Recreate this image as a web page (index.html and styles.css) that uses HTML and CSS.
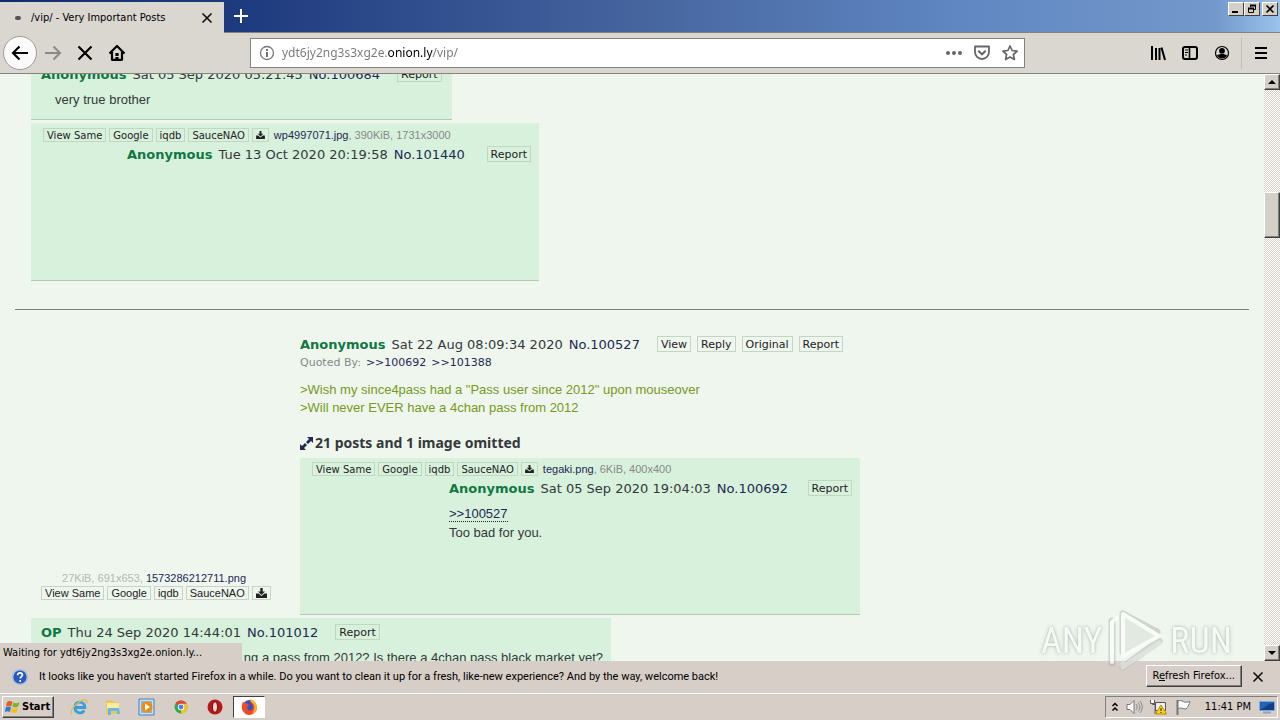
FILE: index.html
```html
<!DOCTYPE html>
<html lang="en">
<head>
<meta charset="utf-8">
<title>/vip/ - Very Important Posts</title>
<link rel="stylesheet" href="styles.css">
</head>
<body>
<svg width="0" height="0" class="defs">
  <symbol id="download" viewBox="0 0 11 10"><path d="M4.3 0h2.4v3.5H9L5.5 7 2 3.500h2.300z" fill="#222"/><path d="M0 5.500h2.500L5.500 8l3-2.500H11V10H0z" fill="#222"/></symbol>
  <symbol id="close" viewBox="0 0 12 12"><path d="M2 2l8 8m0-8l-8 8" stroke="#111" stroke-width="1.700" fill="none" stroke-linecap="round"/></symbol>
</svg>

<header class="titlebar">
  <div class="tab">
    <span class="tab-dot"></span>
    <span class="tab-title">/vip/ - Very Important Posts</span>
    <button class="icon-btn" aria-label="Close tab"><svg width="12" height="12"><use href="#close"/></svg></button>
  </div>
  <button class="icon-btn new-tab" aria-label="New tab"><svg width="14" height="14" viewBox="0 0 14 14"><path d="M7 0v14M0 7h14" stroke="#fff" stroke-width="2"/></svg></button>
  <div class="window-buttons">
    <button aria-label="Minimize"><svg width="12" height="10" viewBox="0 0 12 10"><path d="M2 8h6" stroke="#000" stroke-width="2"/></svg></button>
    <button aria-label="Restore"><svg width="12" height="10" viewBox="0 0 12 10"><path d="M4.500 3V1.500h5v4H8M2.500 4.500h5v4h-5z" fill="none" stroke="#000"/><path d="M4 1.500h6M2 4.500h6" stroke="#000" stroke-width="2"/></svg></button>
    <button class="last" aria-label="Close"><svg width="12" height="10" viewBox="0 0 12 10"><path d="M2.500 1.500l7 7m0-7l-7 7" stroke="#000" stroke-width="1.600"/></svg></button>
  </div>
</header>

<nav class="toolbar">
  <div class="nav-buttons">
    <button class="icon-btn back" aria-label="Back"><svg width="18" height="16" viewBox="0 0 18 16"><path d="M17 8H2M8.500 1.500L2 8l6.500 6.500" fill="none" stroke="#000" stroke-width="2.200"/></svg></button>
    <button class="icon-btn" aria-label="Forward"><svg width="18" height="16" viewBox="0 0 18 16"><path d="M1 8h15M9.500 1.500L16 8l-6.500 6.500" fill="none" stroke="#8b8985" stroke-width="2"/></svg></button>
    <button class="icon-btn" aria-label="Stop"><svg width="16" height="16" viewBox="0 0 16 16"><path d="M1.500 1.500l13 13m0-13l-13 13" stroke="#000" stroke-width="2.200"/></svg></button>
    <button class="icon-btn" aria-label="Home"><svg width="18" height="18" viewBox="0 0 18 18"><path d="M1.500 9.500L9 2l7.500 7.500M4 8v7.800h10V8" fill="none" stroke="#000" stroke-width="2.200" stroke-linejoin="round"/><path d="M7.400 9h3.200v3H7.400zM7.400 13h3.200v3H7.400z"/></svg></button>
  </div>
  <div class="urlbar">
    <svg width="16" height="16" viewBox="0 0 16 16"><circle cx="8" cy="8" r="6.500" fill="none" stroke="#777" stroke-width="1.300"/><path d="M8 7v5M8 4v2" stroke="#666" stroke-width="1.800"/></svg>
    <input type="text" aria-label="Address" value="ydt6jy2ng3s3xg2e.onion.ly/vip/">
    <button class="icon-btn" aria-label="Page actions"><svg width="18" height="16" viewBox="0 0 18 16" fill="#666"><circle cx="3" cy="8" r="2"/><circle cx="9" cy="8" r="2"/><circle cx="15" cy="8" r="2"/></svg></button>
    <button class="icon-btn" aria-label="Save to Pocket"><svg width="18" height="16" viewBox="0 0 18 16"><path d="M2 1.500h14v5.500a7 7 0 0 1-14 0z" fill="none" stroke="#666" stroke-width="1.800" stroke-linejoin="round"/><path d="M5.300 5.800L9 9.300l3.700-3.500" fill="none" stroke="#666" stroke-width="2"/></svg></button>
    <button class="icon-btn" aria-label="Bookmark"><svg width="18" height="18" viewBox="0 0 18 18"><path d="M9 2l2.100 4.500 5 .6-3.700 3.400 1 5L9 13l-4.400 2.500 1-5L1.900 7.100l5-.6z" fill="none" stroke="#666" stroke-width="1.700" stroke-linejoin="round"/></svg></button>
  </div>
  <div class="tools">
    <button class="icon-btn" aria-label="Library"><svg width="16" height="16" viewBox="0 0 16 16"><path d="M2 1v14M6 3v12M9.500 3v12M11.500 2.500L15 15" stroke="#000" stroke-width="2"/></svg></button>
    <button class="icon-btn" aria-label="Sidebars"><svg width="16" height="14" viewBox="0 0 16 14"><rect x="1" y="1" width="14" height="12" rx="2" fill="none" stroke="#000" stroke-width="2"/><path d="M7.500 1v12" stroke="#000" stroke-width="1.600"/><path d="M3 4h3M3 6.500h3M3 9h2" stroke="#000"/></svg></button>
    <button class="icon-btn" aria-label="Account"><svg width="16" height="16" viewBox="0 0 16 16"><circle cx="8" cy="8" r="6.500" fill="none" stroke="#000" stroke-width="1.200"/><circle cx="8" cy="5.800" r="2.900"/><path d="M3 10.500c2-2 8-2 10 0-1 2-3 3-5 3s-4-1-5-3z"/></svg></button>
    <button class="icon-btn menu" aria-label="Open menu"><svg width="12" height="12" viewBox="0 0 12 12"><path d="M0 1h12M0 6h12M0 11h12" stroke="#000" stroke-width="2"/></svg></button>
  </div>
</nav>

<div class="viewport">
  <main class="page">
    <article class="post post-short">
      <div class="post-head"><b>Anonymous</b> <time>Sat 05 Sep 2020 05:21:45</time> <a href="#p100684">No.100684</a><button class="tag first">Report</button></div>
      <p class="text indent">very true brother</p>
    </article>

    <article class="post post-image">
      <div class="file"><button class="tag">View Same</button><button class="tag">Google</button><button class="tag">iqdb</button><button class="tag">SauceNAO</button><button class="tag" aria-label="Download"><svg width="9" height="8"><use href="#download"/></svg></button><span class="meta"><a href="#wp">wp4997071.jpg</a>, 390KiB, 1731x3000</span></div>
      <div class="post-main">
        <div class="thumb thumb-tall"></div>
        <div class="post-content"><div class="post-head"><b>Anonymous</b> <time>Tue 13 Oct 2020 20:19:58</time> <a href="#p101440">No.101440</a><button class="tag first">Report</button></div></div>
      </div>
    </article>

    <hr>

    <section class="thread">
      <aside class="op-file">
        <div class="op-meta">27KiB, 691x653, <a href="#op">1573286212711.png</a></div>
        <div class="file"><button class="tag">View Same</button><button class="tag">Google</button><button class="tag">iqdb</button><button class="tag">SauceNAO</button><button class="tag" aria-label="Download"><svg width="11" height="10"><use href="#download"/></svg></button></div>
      </aside>
      <div class="thread-body">
        <div class="post-head"><b>Anonymous</b> <time>Sat 22 Aug 08:09:34 2020</time> <a href="#p100527">No.100527</a><button class="tag first">View</button><button class="tag">Reply</button><button class="tag">Original</button><button class="tag">Report</button></div>
        <div class="quoted"><span>Quoted By:</span><a href="#p100692">&gt;&gt;100692</a><a href="#p101388">&gt;&gt;101388</a></div>
        <p class="green">&gt;Wish my since4pass had a "Pass user since 2012" upon mouseover<br>&gt;Will never EVER have a 4chan pass from 2012</p>
        <div class="omitted"><svg width="13" height="13" viewBox="0 0 13 13"><path d="M7 0h6v6l-2-2-3 3-2-2 3-3zM6 13H0V7l2 2 3-3 2 2-3 3z" fill="#27284f"/></svg>21 posts and 1 image omitted</div>
        <article class="post post-wide">
          <div class="file"><button class="tag">View Same</button><button class="tag">Google</button><button class="tag">iqdb</button><button class="tag">SauceNAO</button><button class="tag" aria-label="Download"><svg width="9" height="8"><use href="#download"/></svg></button><span class="meta"><a href="#tegaki">tegaki.png</a>, 6KiB, 400x400</span></div>
          <div class="post-main">
            <div class="thumb thumb-wide"></div>
            <div class="post-content">
              <div class="post-head"><b>Anonymous</b> <time>Sat 05 Sep 2020 19:04:03</time> <a href="#p100692">No.100692</a><button class="tag first">Report</button></div>
              <p class="text"><a class="backlink" href="#p100527">&gt;&gt;100527</a><br>Too bad for you.</p>
            </div>
          </div>
        </article>
      </div>
    </section>

    <article class="post post-op">
      <div class="post-head"><b>OP</b> <time>Thu 24 Sep 2020 14:44:01</time> <a href="#p101012">No.101012</a><button class="tag first">Report</button></div>
      <p class="text text-end">ng a pass from 2012? Is there a 4chan pass black market yet?</p>
    </article>
  </main>

  <div class="scrollbar">
    <button aria-label="Scroll up"><svg width="8" height="4" viewBox="0 0 8 4"><path d="M0 4l4-4 4 4z"/></svg></button>
    <div class="track-above"></div>
    <div class="scroll-thumb"></div>
    <div class="track-below"></div>
    <button aria-label="Scroll down"><svg width="8" height="4" viewBox="0 0 8 4"><path d="M0 0h8L4 4z"/></svg></button>
  </div>

  <div class="status">Waiting for ydt6jy2ng3s3xg2e.onion.ly...</div>
</div>

<div class="notice">
  <div class="watermark">
    <span>ANY</span>
    <svg width="58" height="64" viewBox="0 0 58 64" fill="none" stroke-linejoin="round" stroke-linecap="round">
      <g stroke="#aab3ac" stroke-opacity=".6" stroke-width="7"><path d="M16 5v38l34-20M50 23L16 5M5 12v42M16 58l36-26"/></g>
      <path d="M16 5v42l36-20z" fill="#dfe6df" stroke="#fbfdfb" stroke-width="4"/>
      <path d="M5 53V13l5-4" stroke="#fbfdfb" stroke-width="4"/>
      <path d="M16 58l36-24M16 58v-4" stroke="#dcdfdb" stroke-width="5"/>
    </svg>
    <span>RUN</span>
  </div>
  <svg width="16" height="16" viewBox="0 0 16 16"><circle cx="8" cy="8" r="7.300" fill="#2759bd" stroke="#a9bbdf" stroke-width="1.400"/><path d="M5.600 6.300c0-3.400 5-3.100 4.800-.3C10.300 7.500 8.200 7.700 8.200 9.600M8.200 11v2" fill="none" stroke="#fff" stroke-width="1.700"/></svg>
  <span class="notice-text">It looks like you haven't started Firefox in a while. Do you want to clean it up for a fresh, like-new experience? And by the way, welcome back!</span>
  <button class="refresh">R<u>e</u>fresh Firefox...</button>
  <button class="icon-btn" aria-label="Dismiss"><svg width="12" height="12"><use href="#close"/></svg></button>
</div>

<footer class="taskbar">
  <button class="start"><svg width="16" height="16" viewBox="0 0 16 16"><path d="M2 3c2-1.500 4-1.200 5.500 0L6.300 7.500C4.500 6.300 3 6.500 1 7.500z" fill="#e45a20"/><path d="M8.500 3.500c2 1.300 4 1 6-.5L13.300 7.500c-2 1.500-4 1.300-6 .3z" fill="#76b82a"/><path d="M.8 8.500c2-1.300 3.500-1.200 5.200 0L4.800 13c-1.800-1.300-3.400-1-5 0z" fill="#2c78d4"/><path d="M7 9c2 1.300 4 1 6-.5L11.800 13c-2 1.500-4 1.300-6 .3z" fill="#fbbd15"/></svg>Start</button>
  <div class="apps">
    <button class="icon-btn" aria-label="Internet Explorer"><svg width="18" height="18" viewBox="0 0 18 18"><path d="M14.300 12.500c-2.500 4-9.500 3-9.500-3.500 0-6.500 10-6.500 10 .5H6" fill="none" stroke="#36a0df" stroke-width="2.800"/><path d="M2 16C-1.500 12 10 1 16 2c1.500.5 1 2.500.5 3.500" fill="none" stroke="#e5bb42" stroke-width="1.300"/></svg></button>
    <button class="icon-btn" aria-label="File Explorer"><svg width="18" height="18" viewBox="0 0 18 18"><path d="M2 4l1-2h5l1 2h6v12H2z" fill="#e8c75c"/><path d="M3 5h12v6H3z" fill="#fbed9f"/><path d="M4 10h11l1 6h-3v-3H7v4H4z" fill="#68b7e4"/></svg></button>
    <button class="icon-btn" aria-label="Media Player"><svg width="18" height="18" viewBox="0 0 18 18"><path d="M1 1h15v16H1z" fill="#c6e0f3" stroke="#4382ba"/><path d="M3 3h11v12H3z" fill="#86b5d9"/><circle cx="9" cy="9" r="5.500" fill="#f28a14"/><path d="M7 5.500v7L12 9z" fill="#fff"/></svg></button>
    <button class="icon-btn" aria-label="Chrome"><svg width="18" height="18" viewBox="0 0 18 18"><circle cx="9" cy="9" r="6.500" fill="#34a853"/><path d="M3.400 5.700A6.500 6.500 0 0 1 14.600 5.700L9 9z" fill="#e94335"/><path d="M14.600 5.700A6.500 6.500 0 0 1 9 15.500V9l.5-3.300z" fill="#fbc116"/><circle cx="9" cy="9" r="3.200" fill="#fff"/><circle cx="9" cy="9" r="2.400" fill="#4285f4"/></svg></button>
    <button class="icon-btn" aria-label="Opera"><svg width="18" height="18" viewBox="0 0 18 18"><circle cx="9" cy="9" r="7.500" fill="#b71717"/><ellipse cx="9" cy="9" rx="2.500" ry="5.300" fill="#efd9d4" stroke="#7d0909"/></svg></button>
    <button class="icon-btn active" aria-label="Firefox"><svg width="18" height="18" viewBox="0 0 18 18"><circle cx="9.500" cy="9" r="7" fill="#3b4fc4"/><path d="M3 3.500c0 1 2 1.500 3 1.500l3 2-2 2 1 3c3 2 5-1 5-3 0-3-3-4-3-7 4 1 7 4 7 8a7.600 7.600 0 0 1-15 1c-.5-3 0-5 1-7.500z" fill="#f04b23"/><path d="M10 1c4 1 7 4 7 8 0 3-2 6-5 7 2-3 3-6 2-9-1-2-4-3-4-6z" fill="#ffb51e"/></svg></button>
  </div>
  <div class="tray">
    <svg width="8" height="10" viewBox="0 0 8 10"><path d="M1.500 4L4 1.500 6.500 4M1.500 8.500L4 6l2.500 2.500" fill="none" stroke="#000" stroke-width="1.500"/></svg>
    <svg width="17" height="16" viewBox="0 0 17 16"><path d="M1 5.500h3l4-4v13l-4-4H1z" fill="#fff" stroke="#777"/><path d="M10 5c1.500 2 1.500 4 0 6M12 3.500c2.500 3 2.500 6 0 9M14 2c3 4 3 8 0 12" fill="none" stroke="#888"/></svg>
    <svg width="18" height="16" viewBox="0 0 18 16"><path d="M5.500 3.500h10v8h-10zM2.500 1v4.500H5V15" fill="#eee" stroke="#555"/><path d="M.5 1v3.500h4V1" fill="#fff" stroke="#555"/><path d="M11 6l5.500 9h-11z" fill="#ffd21a" stroke="#b78b00"/><path d="M11 9v3M11 13v1" stroke="#222"/></svg>
    <svg width="17" height="16" viewBox="0 0 17 16"><path d="M2.500 1v15" stroke="#777" stroke-width="2"/><path d="M3 2c3-1.500 5 .5 6 1 2 .5 4 0 6-.5-1 3-2 6-4 7.500-3 0-5-2-8-.5z" fill="#fff" stroke="#777"/></svg>
    <time>11:41 PM</time>
    <svg width="16" height="14" viewBox="0 0 16 14"><path d="M.5 1.500h15v9H.5z" fill="#2462b5" stroke="#83a8d6"/><path d="M1 9c5 0 7-6 14-6v7H1z" fill="#123d88"/><path d="M4 12.500h8" stroke="#8aa6c6" stroke-width="2"/></svg>
  </div>
</footer>
</body>
</html>
```

FILE: styles.css
```css
* { box-sizing: border-box; }
body {
  margin: 0;
  height: 100vh;
  display: flex;
  flex-direction: column;
  overflow: hidden;
  background: #d6cec7;
  color: #000;
  font: 11px/14px "DejaVu Sans Condensed", "DejaVu Sans", sans-serif;
}
.defs { position: absolute; }
button { font: inherit; color: inherit; margin: 0; padding: 0; border: 0; background: none; }
svg { display: block; flex: none; }
a { color: #1e2854; text-decoration: none; }
p { margin: 0; }
.icon-btn { display: flex; align-items: center; justify-content: center; flex: none; }

/* Window frame */
.titlebar {
  flex: none;
  height: 33px;
  display: flex;
  align-items: stretch;
  background: linear-gradient(90deg, #122c70 0, #203c80 20%, #46659f 50%, #6087c2 75%, #7398cb 95%, #9cc3ec 100%);
  border-bottom: 1px solid #85827d;
}
.tab {
  width: 224px;
  margin: 2px 0 -1px;
  padding: 0 11px 0 15px;
  display: flex;
  align-items: center;
  background: #dad6d0;
}
.tab-dot { width: 6px; height: 4px; border-radius: 2px; background: #555; }
.tab-title { flex: 1; margin-left: 10px; }
.new-tab { margin-left: 10px; }
.window-buttons { margin-left: auto; padding: 2px 2px 0 0; display: flex; align-items: flex-start; }
.window-buttons button {
  width: 16px;
  height: 14px;
  padding: 1px;
  background: #d4d0c8;
  border: 1px solid;
  border-color: #fff #404040 #404040 #fff;
}
.window-buttons .last { margin-left: 2px; }

.toolbar {
  flex: none;
  height: 41px;
  display: flex;
  align-items: center;
  background: #dad6d0;
  border-bottom: 1px solid #85827d;
}
.nav-buttons { flex: none; width: 250px; display: flex; align-items: center; padding-left: 3px; }
.nav-buttons button { width: 32px; height: 34px; }
.nav-buttons .back { width: 34px; border-radius: 50%; background: #fafafa; border: 1px solid #a09d99; }
.urlbar {
  flex: 1;
  height: 30px;
  display: flex;
  align-items: center;
  gap: 10px;
  padding: 0 5px 0 8px;
  background: #fff;
  border: 1px solid #85827d;
}
.urlbar input {
  flex: 1;
  min-width: 0;
  margin-left: -3px;
  padding: 0;
  border: 0;
  outline: 0;
  font: 12px/18px "Noto Sans", sans-serif;
  color: transparent;
  background: linear-gradient(90deg, #777 106px, #000 106px 151px, #777 151px);
  -webkit-background-clip: text;
  background-clip: text;
}
.tools { flex: none; width: 255px; display: flex; justify-content: flex-end; align-items: center; }
.tools button { width: 32px; height: 32px; }
.tools .menu { width: 39px; margin-left: 3px; border-left: 1px solid #c2beb8; }

/* Board page */
.viewport { flex: 1; min-height: 0; position: relative; display: flex; overflow: hidden; background: #eef6ee; }
.page {
  flex: 1;
  min-width: 0;
  margin-top: -14px;
  padding: 0 15px;
  color: #34383a;
  font: 13px/18px "Liberation Sans", Arial, sans-serif;
}
.page hr { height: 1px; margin: 28px 0 24px; border: 0; background: #7b817c; }
.post {
  width: fit-content;
  margin: 0 0 3px 16px;
  padding: 4px 8px 10px 10px;
  background: #d8f1dc;
  border-bottom: 1px solid #b5c9b9;
}
.post-short { min-width: 421px; }
.post-image { min-width: 508px; padding: 3px 8px 2px 10px; }
.post-wide { min-width: 560px; margin-left: 0; padding: 2px 8px 2px 10px; }
.post-op { min-width: 580px; margin-top: 3px; }
.post-head {
  height: 21px;
  padding-top: 1px;
  display: flex;
  align-items: center;
  gap: 6px;
  white-space: nowrap;
  font: 13px/20px "DejaVu Sans", Verdana, sans-serif;
}
.post-head b { color: #117743; }
.tag {
  height: 16px;
  padding: 0 3px;
  border: 1px solid #c3d6c4;
  color: #222;
  font: 11px/13px "DejaVu Sans", Verdana, sans-serif;
}
.post-head .tag { margin-bottom: 2px; }
.post-head .first { margin-left: 11px; }
.file { height: 18px; display: flex; align-items: center; gap: 3px; white-space: nowrap; padding-left: 2px; }
.file .tag { height: 14px; font-size: 10px; line-height: 11px; }
.meta { margin-left: 2px; font-size: 11px; color: #888; }
.post-main { display: flex; }
.post-content { flex: 1; }
.post-content .first { margin-left: auto; }
.thumb { flex: none; height: 134px; }
.thumb-tall { width: 86px; }
.thumb-wide { width: 139px; }
.text { margin-top: 5px; line-height: 19px; }
.indent { padding-left: 14px; }
.text-end { text-align: right; }
.backlink { border-bottom: 1px dotted #222; }

.thread { display: flex; }
.op-file {
  flex: none;
  width: 285px;
  display: flex;
  flex-direction: column;
  justify-content: flex-end;
  padding: 0 30px 13px 24px;
}
.op-meta { padding-right: 24px; text-align: right; font: 11px/12px "Liberation Sans", Arial, sans-serif; color: #b5b9b5; }
.op-file .tag { font: 11px/12px "Liberation Sans", Arial, sans-serif; }
.quoted { display: flex; gap: 5px; font: 11px/16px "DejaVu Sans", Verdana, sans-serif; color: #888; }
.green { margin-top: 10px; color: #789922; }
.omitted { display: flex; align-items: center; gap: 2px; margin: 17px 0 6px; font: bold 14px/18px "Noto Sans", sans-serif; }
.thread .post { margin-bottom: 0; }

/* Scrollbar */
.scrollbar {
  flex: none;
  width: 16px;
  display: flex;
  flex-direction: column;
  background: repeating-conic-gradient(#d4d0c8 0 25%, #fff 0 50%) 0 0 / 2px 2px;
}
.scrollbar button, .scroll-thumb {
  flex: none;
  height: 16px;
  display: flex;
  align-items: center;
  justify-content: center;
  background: #d4d0c8;
  border: 1px solid;
  border-color: #fff #404040 #404040 #fff;
  box-shadow: inset -1px -1px #808080;
}
.scroll-thumb { height: 46px; }
.track-above { flex: 1; }
.track-below { flex: 4; }

.status {
  position: absolute;
  left: 0;
  bottom: 0;
  width: 242px;
  padding: 3px 3px 1px;
  background: #d6cec7;
}

/* Notification bar */
.notice {
  position: relative;
  flex: none;
  height: 33px;
  display: flex;
  align-items: center;
  padding: 0 16px 0 12px;
  border-bottom: 1px solid #fff;
  background: #d6cec7;
}
.notice-text { flex: 1; margin-left: 11px; white-space: nowrap; font-family: "Roboto", sans-serif; }
.refresh {
  position: relative;
  height: 22px;
  padding: 0 6px;
  margin: 0 10px 3px 0;
  background: #d6cec7;
  border: 1px solid;
  border-color: #fff #404040 #404040 #fff;
  box-shadow: inset -1px -1px #808080;
}
.watermark {
  position: absolute;
  right: 48px;
  bottom: 20px;
  display: flex;
  align-items: center;
  gap: 5px;
  opacity: .8;
  color: #f9fbf8;
  font: 36px/64px "Roboto Condensed", "Roboto", sans-serif;
  text-shadow: 0 0 2px #a5aea7, 0 0 4px #b5bdb6;
  pointer-events: none;
}

/* Taskbar */
.taskbar { flex: none; height: 26px; display: flex; align-items: center; padding: 0 2px; }
.start {
  width: 52px;
  height: 22px;
  display: flex;
  align-items: center;
  gap: 1px;
  padding-left: 2px;
  font-weight: bold;
  border: 1px solid;
  border-color: #fff #404040 #404040 #fff;
  box-shadow: inset -1px -1px #808080;
}
.apps { flex: 1; display: flex; margin-left: 9px; gap: 2px; }
.apps button { width: 32px; height: 22px; }
.apps .active { background: #fff; border: 1px solid; border-color: #404040 #fff #fff #404040; }
.tray {
  height: 22px;
  display: flex;
  align-items: center;
  gap: 7px;
  padding: 0 2px 0 5px;
  border: 1px solid;
  border-color: #808080 #fff #fff #808080;
}
.tray time { margin: 0 1px 0 6px; }
```
